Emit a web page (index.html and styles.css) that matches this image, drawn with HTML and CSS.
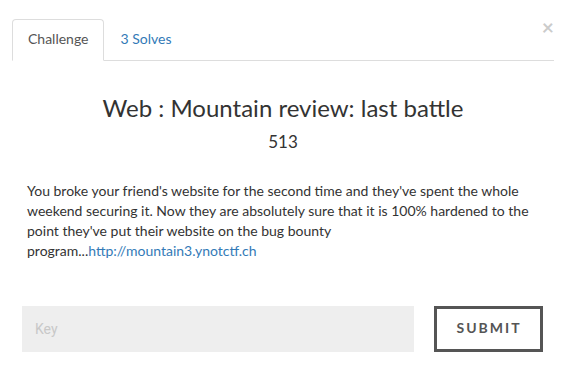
FILE: index.html
```html
<!DOCTYPE html>
<html>
<head>
<meta charset="utf-8">
<link rel="stylesheet" href="styles.css">
</head>
<body>
<div class="modal">
  <div class="tabs-row">
    <ul class="tabs">
      <li class="tab active">Challenge</li>
      <li class="tab">3 Solves</li>
    </ul>
    <span class="close">×</span>
  </div>
  <div class="content">
    <h2 class="title">Web : Mountain review: last battle</h2>
    <h3 class="points">513</h3>
    <p class="desc">You broke your friend's website for the second time and they've spent the whole weekend securing it. Now they are absolutely sure that it is 100% hardened to the point they've put their website on the bug bounty program...<a href="#">http://mountain3.ynotctf.ch</a></p>
    <div class="submit-row">
      <input class="key" type="text" placeholder="Key">
      <button class="submit">SUBMIT</button>
    </div>
  </div>
</div>
</body>
</html>
```

FILE: styles.css
```css
* { box-sizing: border-box; }
html, body { margin: 0; padding: 0; background: #fff; }
body { font-family: Lato, "Open Sans", sans-serif; color: #333; }
.modal { padding: 19px 11px 0 12px; }
.tabs-row { position: relative; }
.tabs {
  list-style: none; margin: 0; padding: 0;
  display: flex; border-bottom: 1px solid #ddd; height: 42px;
}
.tab {
  font-size: 14px; line-height: 20px; padding: 9px 14px 12px 15px;
  color: #337ab7; border: 1px solid transparent; border-radius: 4px 4px 0 0;
  margin-right: 1px;
}
.tab.active {
  color: #555; background: #fff; border-color: #ddd; border-bottom-color: #fff;
  height: 42px;
}
.close {
  position: absolute; right: 0; top: -2px; font-size: 21px; font-weight: bold;
  line-height: 20px; color: #000; opacity: 0.2;
}
.title {
  text-align: center; font-size: 24px; font-weight: 400; margin: 32px 0 0;
  line-height: 30px; color: #333;
}
.points {
  text-align: center; font-size: 17px; font-weight: 400; margin: 8px 0 0;
  line-height: 22px; color: #333;
}
.desc {
  font-size: 14px; line-height: 20px; margin: 28px 14px 0 15px; color: #333;
}
.desc a { color: #337ab7; text-decoration: none; }
.submit-row { display: flex; margin: 45px 11px 0 10px; gap: 20px; }
.key {
  flex: 1; height: 46px; border: none; background: #eee; padding: 0 13px;
  font-family: Roboto, sans-serif; font-size: 14px; color: #555;
}
.key::placeholder { color: #c8c8c8; }
.submit {
  width: 109px; height: 46px; border: 3px solid #555; background: #fff;
  font-family: Lato, sans-serif; font-weight: bold; font-size: 14px;
  letter-spacing: 2px; color: #555; padding: 0 0 3px 1px;
}
```
